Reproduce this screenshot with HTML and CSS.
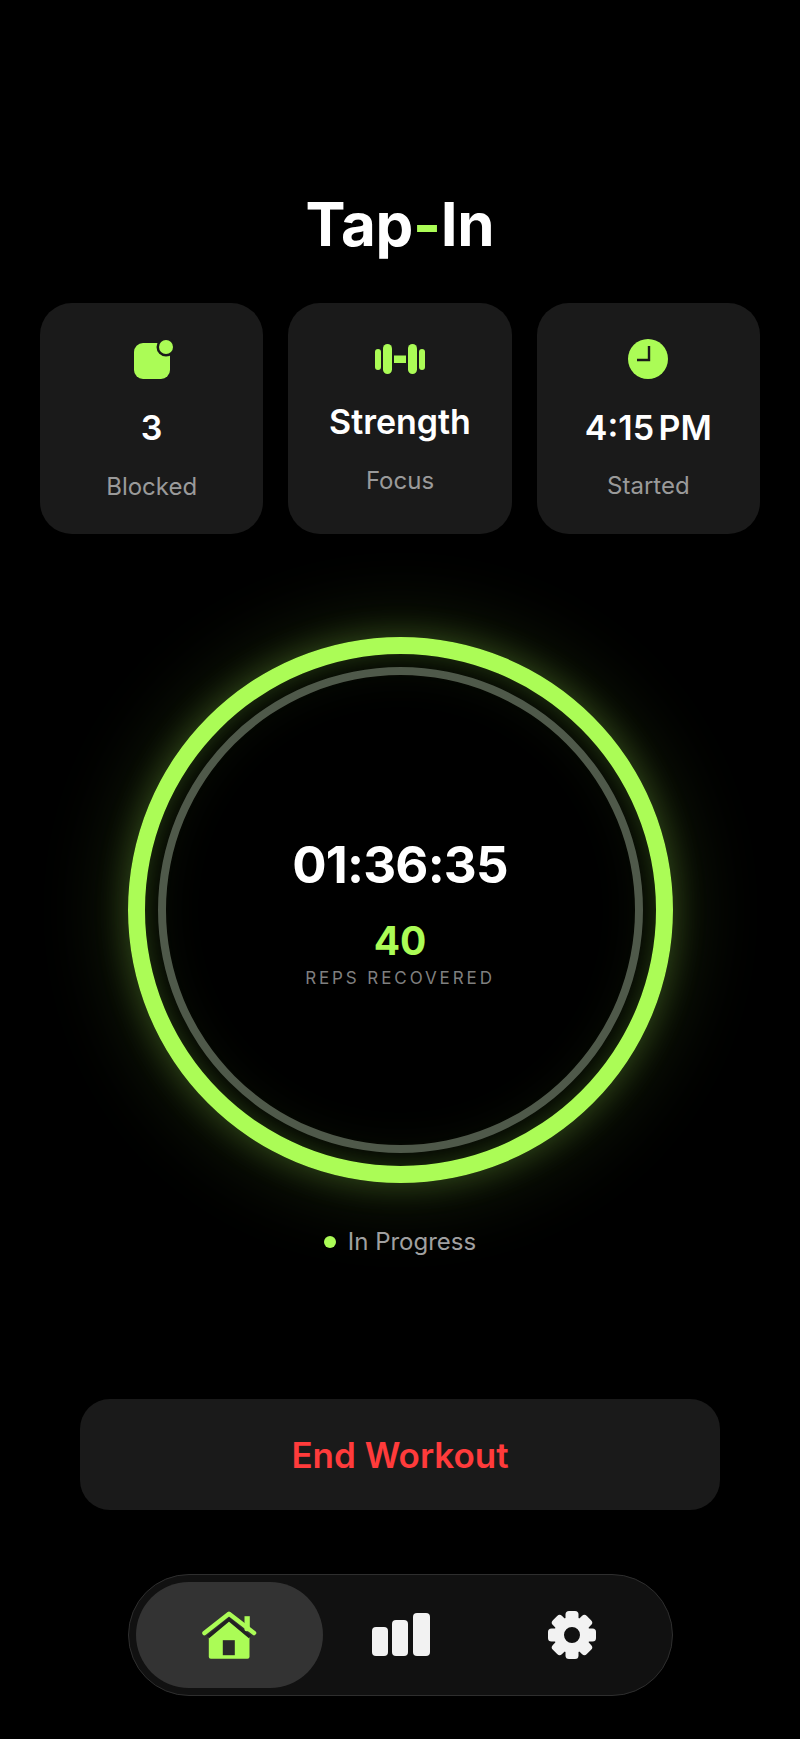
FILE: index.html
```html
<!DOCTYPE html>
<html lang="en">
<head>
<meta charset="utf-8">
<title>Tap-In</title>
<link rel="stylesheet" href="styles.css">
</head>
<body>
<main class="app">
  <h1 class="title">Tap<span class="accent">-</span>In</h1>
  <section class="stats">
    <div class="card">
      <svg class="icon" viewBox="0 0 50 42" width="50" height="42">
        <rect x="7" y="5" width="36" height="36" rx="9" fill="#abfc56"/>
        <circle cx="39" cy="9" r="9.5" fill="#1a1a1a"/>
        <circle cx="39" cy="9" r="7" fill="#abfc56"/>
      </svg>
      <div class="value">3</div>
      <div class="label">Blocked</div>
    </div>
    <div class="card card-focus">
      <svg class="icon" viewBox="0 0 50 42" width="50" height="42">
        <g fill="#abfc56">
          <rect x="0" y="11" width="6" height="21" rx="3"/>
          <rect x="8" y="6" width="9" height="30" rx="4.5"/>
          <rect x="19" y="17.500" width="12" height="7.500"/>
          <rect x="33" y="6" width="9" height="30" rx="4.5"/>
          <rect x="44" y="11" width="6" height="21" rx="3"/>
        </g>
      </svg>
      <div class="value">Strength</div>
      <div class="label">Focus</div>
    </div>
    <div class="card card-time">
      <svg class="icon" viewBox="0 0 50 42" width="50" height="42">
        <circle cx="25" cy="21" r="20" fill="#abfc56"/>
        <path d="M26 8v14H14" fill="none" stroke="#1a1a1a" stroke-width="2.400"/>
      </svg>
      <div class="value">4:15 PM</div>
      <div class="label">Started</div>
    </div>
  </section>

  <section class="ring-wrap">
    <div class="ring">
      <div class="ring-inner">
        <div class="timer">01:36:35</div>
        <div class="reps">40</div>
        <div class="reps-label">REPS RECOVERED</div>
      </div>
    </div>
  </section>

  <div class="status"><span class="dot"></span>In Progress</div>

  <button class="end">End Workout</button>

  <nav class="nav">
    <div class="nav-item active">
      <svg viewBox="0 0 56 48" width="56" height="48">
        <path d="M43.500 5.200h5.300v15h-5.300z" fill="#abfc56"/>
        <path d="M28 9 48.500 25v20.800a2 2 0 0 1-2 2H9.800a2 2 0 0 1-2-2V25z" fill="#abfc56"/>
        <rect x="21.800" y="29.200" width="12" height="15" fill="#2a2a2a"/>
        <path d="M7 26 28 8.500 49 26" fill="none" stroke="#222" stroke-width="3.500"/>
        <path d="M3.500 22 28 2.800 53 22" fill="none" stroke="#abfc56" stroke-width="4.500" stroke-linecap="round" stroke-linejoin="round"/>
      </svg>
    </div>
    <div class="nav-item">
      <svg viewBox="0 0 58 44" width="58" height="44">
        <g fill="#f2f2f2">
          <rect x="0" y="14" width="16" height="29" rx="4"/>
          <rect x="20" y="7" width="16" height="36" rx="4"/>
          <rect x="41" y="0" width="17" height="43" rx="4"/>
        </g>
      </svg>
    </div>
    <div class="nav-item">
      <svg viewBox="-25 -25 50 50" width="50" height="50">
        <g fill="#f2f2f2">
          <rect x="-6.500" y="-24" width="13" height="12" rx="3.500"/>
          <rect x="-6.500" y="-24" width="13" height="12" rx="3.500" transform="rotate(45)"/>
          <rect x="-6.500" y="-24" width="13" height="12" rx="3.500" transform="rotate(90)"/>
          <rect x="-6.500" y="-24" width="13" height="12" rx="3.500" transform="rotate(135)"/>
          <rect x="-6.500" y="-24" width="13" height="12" rx="3.500" transform="rotate(180)"/>
          <rect x="-6.500" y="-24" width="13" height="12" rx="3.500" transform="rotate(225)"/>
          <rect x="-6.500" y="-24" width="13" height="12" rx="3.500" transform="rotate(270)"/>
          <rect x="-6.500" y="-24" width="13" height="12" rx="3.500" transform="rotate(315)"/>
        </g>
        <circle r="13" fill="none" stroke="#f2f2f2" stroke-width="10"/>
      </svg>
    </div>
  </nav>
</main>
</body>
</html>
```
FILE: styles.css
```css
* { box-sizing: border-box; }
html, body { margin: 0; padding: 0; background: #000; }
body { font-family: Inter, "Liberation Sans", sans-serif; color: #fff; }

.app {
  width: 800px;
  height: 1739px;
  display: flex;
  flex-direction: column;
  align-items: center;
  padding-top: 187px;
}

.title {
  margin: 0;
  font-size: 60px;
  line-height: 74px;
  font-weight: 700;
  letter-spacing: -0.3px;
}
.accent { color: #abfc56; }

.stats {
  width: 720px;
  margin-top: 42px;
  display: grid;
  grid-template-columns: repeat(3, 1fr);
  gap: 25px;
}
.card {
  height: 231px;
  background: #1a1a1a;
  border-radius: 32px;
  padding-top: 35px;
  display: flex;
  flex-direction: column;
  align-items: center;
}
.icon { display: block; }
.value {
  margin-top: 28px;
  font-size: 34px;
  line-height: 40px;
  font-weight: 600;
}
.label {
  margin-top: 24px;
  font-size: 24px;
  line-height: 30px;
  color: #9a9a9a;
}
.card-focus .value { margin-top: 22px; }
.card-focus .label { margin-top: 24px; }
.card-time .value { margin-top: 28px; word-spacing: -4px; }
.card-time .label { margin-top: 23px; }

.ring-wrap { margin-top: 103px; }
.ring {
  width: 545px;
  height: 546px;
  border-radius: 50%;
  border: 17px solid #abfc56;
  padding: 13px;
  box-shadow: 0 0 34px rgba(171, 252, 86, 0.24), 0 0 90px rgba(171, 252, 86, 0.18), inset 0 0 26px rgba(171, 252, 86, 0.16), inset 0 0 60px rgba(171, 252, 86, 0.1);
}
.ring-inner {
  width: 100%;
  height: 100%;
  border-radius: 50%;
  border: 8px solid #4f594a;
  display: flex;
  flex-direction: column;
  align-items: center;
  padding-top: 158px;
}
.timer {
  font-size: 51px;
  line-height: 64px;
  font-weight: 700;
  letter-spacing: -0.8px;
}
.reps {
  margin-top: 20px;
  font-size: 39px;
  line-height: 48px;
  font-weight: 700;
  color: #abfc56;
}
.reps-label {
  margin-top: 3px;
  font-size: 17px;
  line-height: 20px;
  letter-spacing: 2.9px;
  color: #7f7f7f;
}

.status {
  margin-top: 44px;
  display: flex;
  align-items: center;
  gap: 12px;
  font-size: 24px;
  line-height: 30px;
  color: #a0a0a0;
}
.dot {
  width: 12px;
  height: 12px;
  border-radius: 50%;
  background: #abfc56;
}

.end {
  margin-top: 142px;
  width: 640px;
  height: 111px;
  border: 0;
  border-radius: 30px;
  background: #1a1a1a;
  color: #ff3b3b;
  font-family: inherit;
  font-size: 35px;
  font-weight: 600;
}

.nav {
  margin-top: 64px;
  width: 545px;
  height: 122px;
  padding: 7px;
  display: grid;
  grid-template-columns: 187px 156px 186px;
  border-radius: 61px;
  background: #111;
  border: 1.500px solid #2e2e2e;
}
.nav-item {
  display: flex;
  align-items: center;
  justify-content: center;
  border-radius: 54px;
}
.nav-item svg { display: block; }
.nav-item.active { background: #333; }
```
